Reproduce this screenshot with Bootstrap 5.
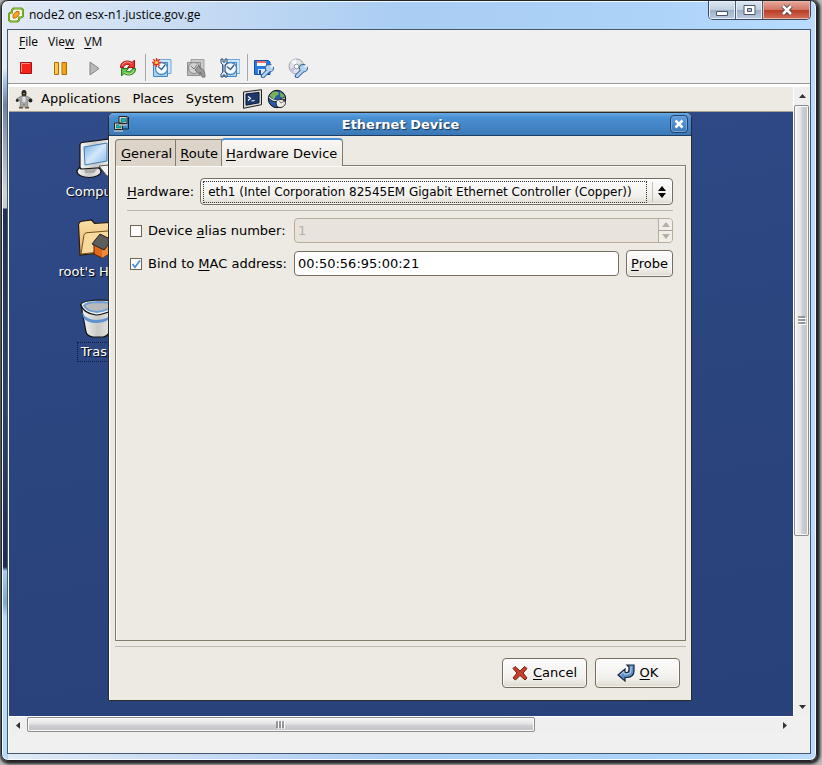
<!DOCTYPE html>
<html lang="en">
<head>
<meta charset="utf-8">
<meta name="viewport" content="width=device-width, initial-scale=1">
<title>node2 on esx-n1.justice.gov.ge</title>
<link href="https://cdn.jsdelivr.net/npm/bootstrap@5.3.0/dist/css/bootstrap.min.css" rel="stylesheet">
<style>
  body { background: #b9b9b9; padding: 0 5px 4px 1px; font: 13px/18px "DejaVu Sans", sans-serif; color: #000; }
  button, input, select { font: inherit; color: inherit; }
  svg { display: block; flex: none; }
  u { text-underline-offset: 2px; text-decoration-thickness: 1px; }

  /* outer Windows frame */
  .aero { min-height: calc(100vh - 4px); border: 1px solid #20242c; border-radius: 7px; padding: 0 5px 6px;
    background:
      linear-gradient(#b5cbe600 0 68px, #a9c6ea 80px, #6f83a5 104px, #ccd1dc 190px, #c8cbd2 207px, #1f3058 208px, #2c436f 400px, #1d2d52 566px, #a9cdf0 570px, #7fa8cb 602px, #b4d9fb 615px) left / 6px 100% no-repeat,
      linear-gradient(90deg, #e2eaf5, #c5daf3 25%, #a9cdf3 50%, #add3f8 80%, #b9dcff);
    box-shadow: inset 0 0 0 1px #f4faff, 1px 1px 3px 2px #222; }
  .caption { height: 28px; font: 12px/16px "Open Sans", sans-serif; }
  .caption-text { padding: 6px 0 0 1px; gap: 5px; }
  .cap-set { height: 19px; border: 1px solid #3a4a62; border-top: 0; border-radius: 0 0 5px 5px; overflow: hidden; }
  .cap-btn { width: 27px; border: 0; border-right: 1px solid #4d5d76; padding: 0;
    background: linear-gradient(#dfe8f2, #c0cfdf 48%, #9aaec6 50%, #bccde0); box-shadow: inset 0 0 0 1px #e6eef7; }
  .cap-close { width: 47px; border-right: 0; background: linear-gradient(#e5a99c, #d27565 48%, #b83a26 50%, #d4705a); box-shadow: inset 0 0 0 1px #eab6a8; }

  .client { border: 1px solid #46586e; background: #f0f0f0; }
  .menus { font: 12px/18px "Open Sans", sans-serif; padding: 3px 11px; gap: 10px; }
  .menus a, .panel a { color: #000; text-decoration: none; }
  .tools { height: 30px; padding-left: 1px; border-bottom: 1px solid #989898; }
  .tool { width: 34px; height: 28px; padding: 0; border: 0; background: none; display: flex; align-items: center; justify-content: center; }
  .tool-rule { width: 1px; height: 27px; margin-right: -1px; background: #a8a8a8; }
  .viewport { border: solid #fff; border-width: 3px 0 0 1px; }

  /* guest desktop */
  .guest { border-right: 1px solid #fff; min-width: 0; }
  .panel { height: 25px; background: #edeae3; border-bottom: 1px solid #a99f91; padding-left: 6px; }
  .panel .text-item { margin-right: 12px; }
  .desk { background: linear-gradient(170deg, #304b89, #2b457f 45%, #29417a); padding-top: 23px; overflow: hidden; }
  .desk-col { width: 178px; color: #fff; gap: 14px; text-shadow: 1px 1px 1px #000; }
  .desk-item { color: #fff; text-decoration: none; display: flex; flex-direction: column; align-items: center; }
  .desk-item.chosen span { outline: 1px dotted #0d1c44; padding: 0 3px; }

  /* dialog */
  .dlg { position: absolute; left: 99px; right: 101px; top: 0; bottom: 15px; background: #edeae3; border: 1px solid #2d2b26; border-radius: 6px 6px 0 0; box-shadow: inset 1px 0 #fff; }
  .dlg-bar { height: 23px; padding: 0 3px 0 4px; border-bottom: 1px solid #1e3e63; border-radius: 5px 5px 0 0; color: #fff;
    background: linear-gradient(#68aae6, #4a8fd3 20%, #4385c6 60%, #3b79b5); text-shadow: 1px 1px 1px #15304f; }
  .dlg-bar strong { padding-top: 2px; }
  .dlg-x { width: 18px; height: 18px; padding: 0; border: 1px solid #21436c; border-radius: 4px; background: linear-gradient(#5fa0dd, #3c78b5); display: flex; align-items: center; justify-content: center; box-shadow: inset 0 0 0 1px #6fa9de; }
  .dlg-body { padding: 2px 5px 12px 6px; }
  .tabset { height: 28px; margin-bottom: -1px; z-index: 1; }
  .tabset button { height: 27px; border: 1px solid #857b6c; border-bottom: 0; padding: 1px 3px 0 4px; margin-right: -1px; background: #dcd4c9; white-space: nowrap; }
  .tabset button:first-child { border-radius: 4px 0 0; padding-left: 5px; }
  .tabset button.current { height: 28px; border-top: 2px solid #4a90d9; border-radius: 4px 4px 0 0; padding-right: 5px; background: linear-gradient(#f8f7f4, #edeae3 80%); }
  .sheet { border: 1px solid #857b6c; padding: 12px 12px 0 11px; box-shadow: inset 1px 1px #fbfaf8; }
  .rule { height: 1px; margin: 5px 0 6px; background: #bcb8b0; }
  .gtk-btn { border: 1px solid #776d5f; border-radius: 4px; padding: 0 4px; background: linear-gradient(#fdfdfc, #f1efeb 70%, #dfdad1); box-shadow: inset 0 0 0 1px #ffffffa0; display: flex; align-items: center; justify-content: center; white-space: nowrap; }
  .hw-label { padding-right: 6px; }
  .hw { height: 27px; padding: 2px 6px 2px 2px; gap: 5px; min-width: 0; }
  .hw select { appearance: none; border: 1px dotted #333; background: none; height: 22px; padding: 0 1px 0 4px; min-width: 0; outline: 0; font-size: 12px; }
  .hw-arrows { border-left: 1px solid #c5beb2; padding-left: 5px; height: 20px; }
  .check-row { height: 27px; margin-bottom: 6px; }
  .check-label { width: 167px; padding-left: 3px; gap: 6px; }
  .check-label input { appearance: none; width: 12px; height: 12px; margin: 0; border: 1px solid #6d6454; background: #fff; flex: none; }
  .check-label input:checked { background: #fff url("data:image/svg+xml,%3Csvg xmlns='http://www.w3.org/2000/svg' viewBox='0 0 10 10'%3E%3Cpath d='M1.5 5 4 8.2 9 1.5' fill='none' stroke='%234a90d9' stroke-width='1.8'/%3E%3C/svg%3E"); }
  .field { height: 25px; margin-right: 7px; border: 1px solid #776d5f; border-radius: 4px; background: #fff; padding: 0 3px; min-width: 0; outline: 0; }
  .spin { height: 25px; border: 1px solid #b8ad98; border-radius: 4px; background: #e8e4dd; overflow: hidden; }
  .spin input { border: 0; background: none; color: #b5b0a7; padding: 0 3px; min-width: 0; }
  .spin-btns { width: 14px; border-left: 1px solid #b8ad98; }
  .spin-btns button { padding: 0; border: 0; background: #f1eee9; display: flex; align-items: center; justify-content: center; flex: 1; }
  .spin-btns button + button { border-top: 1px solid #a9a293; }
  .acts { padding: 5px 6px 0 0; }
  .act { width: 85px; height: 30px; gap: 5px; }

  /* scroll bars */
  .sb { background: #efefef; }
  .sb-v { width: 16px; }
  .sb-h { height: 17px; margin-right: 16px; border-top: 1px solid #fff; }
  .sb button { padding: 0; border: 0; background: none; width: 16px; height: 18px; display: flex; align-items: center; justify-content: center; flex: none; }
  .sb-h button { width: 18px; height: 16px; }
  .thumb { border: 1px solid #8c8c8c; border-radius: 2px; display: flex; align-items: center; justify-content: center; box-shadow: inset 0 0 0 1px #fafafa; }
  .sb-v .thumb { flex: 430; margin-right: 1px; background: linear-gradient(90deg, #f5f5f5, #e4e4e6 45%, #cfd0d3 55%, #c0c1c5); }
  .sb-v .rest { flex: 163; }
  .sb-h .thumb { flex: 507; height: 15px; background: linear-gradient(#f5f5f5, #e4e4e6 45%, #cfd0d3 55%, #c0c1c5); }
  .sb-h .rest { flex: 242; }
  .status { height: 20px; }
</style>
<script src="https://cdn.jsdelivr.net/npm/bootstrap@5.3.0/dist/js/bootstrap.bundle.min.js"></script>
</head>
<body>
<svg width="0" height="0" class="position-absolute" aria-hidden="true">
  <defs>
    <g id="clock"><path d="M5 1.500h14v14H5z" fill="#cfe6fa" stroke="#6fa8dc"/><path d="M1.500 4.500h14v14h-14z" fill="#a9d2f5" stroke="#3f86c8"/><circle cx="9.500" cy="10.500" r="6" fill="#f4faff" stroke="#4f86b8" stroke-width="1.300"/><path d="M6 8.500l3.500 3 3.500-4.500" fill="none" stroke="#33628f" stroke-width="1.300"/></g>
    <g id="wrench"><path d="M9 18l7-7" stroke="#2d5f96" stroke-width="4.500" stroke-linecap="round"/><path d="M15 6.500a4 4 0 0 1 4.500 4.500 3.500 3.500 0 0 1-5 2.500 3.500 3.500 0 0 1 .5-7z" fill="#b5d3f0" stroke="#2d5f96"/><path d="M9 18l7-7" stroke="#b5d3f0" stroke-width="2.500" stroke-linecap="round"/><path d="M17 9.500l2.500-3" stroke="#f0f0f0" stroke-width="2.500"/></g>
    <linearGradient id="metal" x2="1" y2="0"><stop stop-color="#f6f6f4"/><stop offset=".5" stop-color="#c9c9c6"/><stop offset="1" stop-color="#f0f0ee"/></linearGradient>
    <linearGradient id="screen" x2="1" y2="1"><stop stop-color="#6fa9e0"/><stop offset=".5" stop-color="#d3e8fb"/><stop offset="1" stop-color="#85b8e8"/></linearGradient>
    <linearGradient id="manila" x2="0" y2="1"><stop stop-color="#fbdfa7"/><stop offset="1" stop-color="#e7b566"/></linearGradient>
    <linearGradient id="amber" x2="1" y2="0"><stop stop-color="#ffd35a"/><stop offset="1" stop-color="#f09a00"/></linearGradient>
  </defs>
</svg>

<div class="aero d-flex flex-column">
  <header class="caption d-flex">
    <div class="caption-text d-flex align-items-start">
      <svg width="16" height="16" viewBox="0 0 16 16"><path d="M5.500 1.500h8l1.500 1.500v6l-1.500 1.500H11V13l-1.500 1.500H2.500L1 13V7l1.500-1.500H4V3z" fill="#f3f8e4" stroke="#5c9418" stroke-width="2"/><path d="M5.500 1.500h8l1.500 1.500v6l-1.500 1.500H11V13l-1.500 1.500H2.500L1 13V7l1.500-1.500H4V3z" fill="none" stroke="#8fc63d" stroke-width=".8"/><path d="M5 11V8l3-3.500h3V7.500L8 11z" fill="#f6a623" stroke="#c96c0b"/></svg>
      <span>node2 on esx-n1.justice.gov.ge</span>
    </div>
    <div class="cap-set d-flex ms-auto">
      <button class="cap-btn" aria-label="Minimize"><svg class="m-auto" width="14" height="14" viewBox="0 0 14 14"><path d="M1.500 8.500h11v4h-11z" fill="#fff" stroke="#4d5664"/></svg></button>
      <button class="cap-btn" aria-label="Maximize"><svg class="m-auto" width="13" height="12" viewBox="0 0 13 12"><path d="M1 1.500h11v9H1z" fill="#fff" stroke="#4d5664"/><path d="M4.500 4.500h4v3h-4z" fill="#a8bdd6" stroke="#4d5664"/></svg></button>
      <button class="cap-btn cap-close" aria-label="Close window"><svg class="m-auto" width="14" height="12" viewBox="0 0 14 12"><path d="M3 2l8 8M11 2l-8 8" stroke="#4c3b42" stroke-width="4.500"/><path d="M3 2l8 8M11 2l-8 8" stroke="#fff" stroke-width="2.600"/></svg></button>
    </div>
  </header>

  <main class="client d-flex flex-column flex-grow-1">
    <nav class="menus d-flex" aria-label="Window menu"><a href="#"><u>F</u>ile</a><a href="#">Vie<u>w</u></a><a href="#"><u>V</u>M</a></nav>
    <div class="tools d-flex" role="toolbar" aria-label="Virtual machine">
      <button class="tool" aria-label="Power off"><svg width="12" height="12"><path d="M.5.5h11v11H.5z" fill="#f2241c" stroke="#a80f0f"/><path d="M1.500 10V1.500H10" fill="none" stroke="#ff8a80"/></svg></button>
      <button class="tool" aria-label="Suspend"><svg width="13" height="13"><path d="M.5.5h4v12h-4zM8 .5h4.500v12H8z" fill="url(#amber)" stroke="#b56a00"/></svg></button>
      <button class="tool" aria-label="Power on"><svg width="11" height="15"><path d="M1 1l9 6.500L1 14z" fill="#b9b9b9" stroke="#838383"/></svg></button>
      <button class="tool" aria-label="Restart"><svg width="18" height="18" viewBox="0 0 18 18"><path d="M1.500 8.500C1 3 8 0 13 3.500L15.500 1v7.500H8.500l2.300-2.500C8.500 4.500 5.500 5.500 4.500 8.500z" fill="#ee3b2f" stroke="#9c1510"/><path d="M3 6.500C5 2.500 9 2 12.500 4.500" fill="none" stroke="#ff9d94"/><path d="M16.500 9.500C17 15 10 18 5 14.500L2.500 17V9.500h7L7.200 12c2.300 1.500 5.300.5 6.300-2.500z" fill="#66c24a" stroke="#237a1b"/><path d="M15 11.500c-2 4-6 4.500-9.500 2" fill="none" stroke="#b9ec9f"/></svg></button>
      <span class="tool-rule"></span>
      <button class="tool" aria-label="Take snapshot"><svg width="20" height="20" viewBox="0 0 20 20"><use href="#clock"/><path d="M4.500 0v9M0 4.500h9M1.300 1.300l6.400 6.400M7.700 1.300L1.300 7.700" stroke="#ee2c12" stroke-width="1.300"/><circle cx="4.500" cy="4.500" r="1.600" fill="#ffd94a"/></svg></button>
      <button class="tool" aria-label="Revert snapshot"><svg width="20" height="20" viewBox="0 0 20 20"><path d="M5 1.500h13v13H5z" fill="#c9c9c9" stroke="#a2a2a2"/><path d="M1.500 4.500h13v13h-13z" fill="#bbb" stroke="#8f8f8f"/><circle cx="8" cy="10" r="5.500" fill="#d3d3d3" stroke="#8b8b8b"/><path d="M5 8l3 3 3-4" fill="none" stroke="#777"/><path d="M9 12l4-4.500 1 2.500q5 1 5 9h-3q0-4-2-5v2.500z" fill="#9a9a9a" stroke="#717171"/></svg></button>
      <button class="tool" aria-label="Manage snapshots"><svg width="20" height="20" viewBox="0 0 20 20"><g transform="translate(1 0)"><use href="#clock"/></g><path d="M1 1v4l2 2v7l-2 2v3h2v-2h2v2h2v-3l-2-2V7l2-2V1H5v3H3V1z" fill="#dceaf7" stroke="#2c4d73"/></svg></button>
      <span class="tool-rule"></span>
      <button class="tool" aria-label="Floppy settings"><svg width="20" height="20" viewBox="0 0 20 20"><path d="M.5 2.500h14l1.500 1.500v12.500H.5z" fill="#2a7be0" stroke="#1450a8"/><path d="M3 3h9v5H3z" fill="#fff"/><path d="M3 4h9" stroke="#e34234" stroke-width="1.500"/><path d="M4 11h7v5H4z" fill="#dfe7f0"/><path d="M5 12h2v4H5z" fill="#1450a8"/><use href="#wrench"/></svg></button>
      <button class="tool" aria-label="CD settings"><svg width="20" height="20" viewBox="0 0 20 20"><circle cx="8.500" cy="8.500" r="7.500" fill="#dfe2e6" stroke="#9aa0a8"/><path d="M8.500 8.500L3 3.500a7.500 7.500 0 0 1 5-2.300z" fill="#f7fafc"/><path d="M8.500 8.500l6-4.500a7.500 7.500 0 0 1 1.300 4z" fill="#b9d8b5"/><path d="M8.500 8.500L1.500 11a7.500 7.500 0 0 0 3 4z" fill="#c8c0e2"/><circle cx="8.500" cy="8.500" r="2.300" fill="#fff" stroke="#8d959e"/><use href="#wrench"/></svg></button>
    </div>

    <div class="viewport d-flex flex-column flex-grow-1">
      <div class="d-flex flex-grow-1">
        <section class="guest d-flex flex-column flex-grow-1">
          <nav class="panel d-flex align-items-center" aria-label="Guest panel">
            <svg class="me-2" width="18" height="20" viewBox="0 0 18 20"><path d="M9 1c-2 0-2.500 1.500-2.500 3.500L7 7h4l.5-2.500C11.500 2.500 11 1 9 1z" fill="#222"/><path d="M8 4h2l-1 2z" fill="#f0a020"/><path d="M6.500 7L2 9.500V12l3-.5.5 4.500H5v2.500h3L9 15l1 3.500h3V16h-.5l.5-4.500 3 .5V9.500L11.500 7z" fill="#a6a6a6" stroke="#6a6a6a" stroke-width=".6"/><path d="M7.500 8h3v5h-3z" fill="#e0e0e0"/><circle cx="2.200" cy="11.500" r="1.400" fill="#222"/><circle cx="15.500" cy="11.500" r="1.900" fill="#222"/><path d="M4 18h4v1.500H4zM10 18h4v1.500h-4z" fill="#6b5326"/></svg>
            <a class="text-item" href="#">Applications</a><a class="text-item" href="#">Places</a><a class="text-item me-2" href="#">System</a>
            <a href="#" class="me-1" aria-label="Terminal"><svg width="21" height="20" viewBox="0 0 21 20"><path d="M1.500 3L19.500.7v15L1.500 19.300z" fill="#d9d9d4" stroke="#222"/><path d="M4 5l13-1.600v10.400L4 16.200z" fill="#1e3869" stroke="#0c1a38"/><path d="M6 7.500l2.500 1.800L6 11.500M9.500 12l3-.5" fill="none" stroke="#fff" stroke-width="1.200"/></svg></a>
            <a href="#" aria-label="Web browser"><svg width="21" height="20" viewBox="0 0 21 20"><circle cx="10" cy="10" r="8.700" fill="#275aa6" stroke="#111"/><path d="M3 6c2-4 6-4 8-3l1 2-3 2-2 3-4 1z" fill="#79b356"/><path d="M13 3l4 3 .5 3-4-1z" fill="#79b356"/><path d="M2 8c4 5 10 5 16 1" fill="none" stroke="#111" stroke-width="2.600"/><path d="M2 8c4 4.500 10 4.500 16 1" fill="none" stroke="#d5dbe2" stroke-width="1.200"/><path d="M9 14c0-3 4-5 8-2.500 3 2 1 6-3 7-3 .5-5-1.500-5-4.500z" fill="#ededeb" stroke="#222"/><path d="M12 11.500l2 2.500 3-1.500" fill="none" stroke="#777"/></svg></a>
          </nav>

          <div class="desk position-relative flex-grow-1">
            <div class="desk-col d-flex flex-column">
              <a class="desk-item" href="#"><svg width="48" height="48" viewBox="0 0 48 48"><ellipse cx="15" cy="36.500" rx="12" ry="6" fill="url(#metal)" stroke="#111" stroke-width="1.200"/><path d="M10 29l14 4-4 5H11z" fill="#aaa"/><path d="M6 9.500Q6 8 8 7.500L36 4v28L8 34q-2 0-2-2z" fill="url(#metal)" stroke="#111" stroke-width="1.200"/><path d="M10 12l23-4v18l-22 4z" fill="url(#screen)" stroke="#487bb1"/><path d="M25 31l20-2v10l-12 2z" fill="#f1f1ef" stroke="#555"/></svg><span>Computer</span></a>
              <a class="desk-item" href="#"><svg width="48" height="48" viewBox="0 0 48 48"><path d="M4.500 9l2-2.500 11-1.500 3 3.500L44 7v29L6 40z" fill="url(#manila)" stroke="#2b1c08" stroke-width="1.200"/><path d="M7 39l3-19q.5-2 3-2.300L46 15v20z" fill="#f9d99c" stroke="#74501c"/><path d="M20 29l8 3 8-4v10l-8 5-8-4z" fill="#e06a1a" stroke="#5a2507"/><path d="M28 32l8-4v10l-8 5z" fill="#f08a3c"/><path d="M18 29l8-10 12 6-8 10z" fill="#5d5d5d" stroke="#222"/></svg><span>root's Home</span></a>
              <a class="desk-item chosen" href="#"><svg width="48" height="48" viewBox="0 0 48 48"><path d="M7 10l5 27q1 4 7 5h10q5-1 6-5l6-27z" fill="url(#metal)" stroke="#111" stroke-width="1.200"/><path d="M8 17q4 8 15 8 14-1 17-9l-1 4q-4 7-16 8-11 0-14-6z" fill="#5f93cf"/><path d="M7 10q0-4 17-5 17 0 17 4-1 9-19 11Q9 18 7 10z" fill="#f1f3f5" stroke="#111" stroke-width="1.200"/><path d="M10 10.500q2-3 14-3.500 13 0 14 2.500-2 6-15 7.500Q12 16 10 10.500z" fill="#b8babb" stroke="#6e9fd4" stroke-width="2"/></svg><span>Trash</span></a>
            </div>

            <section class="dlg d-flex flex-column" role="dialog" aria-labelledby="dlg-title">
              <header class="dlg-bar d-flex align-items-center">
                <svg width="18" height="18" viewBox="0 0 18 18"><path d="M15.500 2v12H10" fill="none" stroke="#123" /><path d="M6 1.500h8v7H6zM1.500 8h8v6.500h-8z" fill="#d9d7cf" stroke="#222"/><path d="M8 3.500h4.500V7H8zM3.500 9.800H8V13H3.500z" fill="#16b5ae" stroke="#0b6663" stroke-width=".6"/><path d="M1 16h9M6 10h8" stroke="#bbb" stroke-width="1.500"/></svg>
                <strong id="dlg-title" class="flex-grow-1 text-center">Ethernet Device</strong>
                <button class="dlg-x" aria-label="Close dialog"><svg width="10" height="10"><path d="M1.500 1.500l7 7M8.500 1.500l-7 7" stroke="#fff" stroke-width="2.600"/></svg></button>
              </header>
              <div class="dlg-body d-flex flex-column flex-grow-1">
                <div class="tabset d-flex align-items-end position-relative" role="tablist">
                  <button role="tab"><u>G</u>eneral</button><button role="tab"><u>R</u>oute</button><button role="tab" class="current" aria-selected="true"><u>H</u>ardware Device</button>
                </div>
                <div class="sheet flex-grow-1" role="tabpanel">
                  <div class="d-flex align-items-center">
                    <label for="hw" class="hw-label flex-shrink-0"><u>H</u>ardware:</label>
                    <div class="hw gtk-btn flex-grow-1">
                      <select id="hw" class="flex-grow-1"><option>eth1 (Intel Corporation 82545EM Gigabit Ethernet Controller (Copper))</option></select>
                      <span class="hw-arrows d-flex align-items-center"><svg width="8" height="12"><path d="M4 0l4 5H0zM0 7h8l-4 5z"/></svg></span>
                    </div>
                  </div>
                  <div class="rule"></div>
                  <div class="check-row d-flex align-items-center">
                    <label class="check-label d-flex align-items-center"><input type="checkbox"><span>Device <u>a</u>lias number:</span></label>
                    <div class="spin d-flex flex-grow-1">
                      <input class="flex-grow-1" type="text" value="1" aria-label="Alias number" disabled>
                      <div class="spin-btns d-flex flex-column"><button disabled aria-label="Increase"><svg width="8" height="5"><path d="M4 0l4 5H0z" fill="#b5b0a7"/></svg></button><button disabled aria-label="Decrease"><svg width="8" height="5"><path d="M0 0h8L4 5z" fill="#b5b0a7"/></svg></button></div>
                    </div>
                  </div>
                  <div class="check-row d-flex align-items-stretch">
                    <label class="check-label d-flex align-items-center"><input type="checkbox" checked><span>Bind to <u>M</u>AC address:</span></label>
                    <input class="field flex-grow-1 align-self-center" type="text" value="00:50:56:95:00:21" aria-label="MAC address">
                    <button class="gtk-btn"><span><u>P</u>robe</span></button>
                  </div>
                </div>
                <div class="rule"></div>
                <div class="acts d-flex justify-content-end gap-2">
                  <button class="gtk-btn act"><svg width="16" height="16" viewBox="0 0 16 16"><path d="M3 1.500L8 6l4.500-4.500 2.500 2L11 8l4 5-2 2-5-4.500L3.500 15 1 13l4-5L1 3.500z" fill="#c8402c" stroke="#6b1f14"/></svg><span><u>C</u>ancel</span></button>
                  <button class="gtk-btn act"><svg width="18" height="18" viewBox="0 0 18 18"><path d="M10 1h7v6q0 6-7 6.500h-2V17L1 11l7-6v3.500h2q2 0 2-3V3z" fill="#5f8fc4" stroke="#17263c" stroke-width="1.200"/><path d="M3 11l4-3.500V10h4q3 0 3-4V2.500" fill="none" stroke="#b9d2ee"/></svg><span><u>O</u>K</span></button>
                </div>
              </div>
            </section>
          </div>
        </section>

        <div class="sb sb-v d-flex flex-column flex-shrink-0">
          <button aria-label="Scroll up"><svg width="7" height="4"><path d="M3.500 0L7 4H0z" fill="#333"/></svg></button>
          <div class="thumb"><svg width="8" height="9"><path d="M0 1h7M0 4h7M0 7h7" stroke="#555"/><path d="M0 2.500h8M0 5.500h8M0 8.500h8" stroke="#fff"/></svg></div>
          <div class="rest"></div>
          <button aria-label="Scroll down"><svg width="7" height="4"><path d="M0 0h7L3.500 4z" fill="#333"/></svg></button>
        </div>
      </div>
      <div class="sb sb-h d-flex">
        <button aria-label="Scroll left"><svg width="4" height="7"><path d="M4 0v7L0 3.500z" fill="#333"/></svg></button>
        <div class="thumb"><svg width="9" height="8"><path d="M1 0v7M4 0v7M7 0v7" stroke="#555"/><path d="M2.500 0v8M5.500 0v8M8.500 0v8" stroke="#fff"/></svg></div>
        <div class="rest"></div>
        <button aria-label="Scroll right"><svg width="4" height="7"><path d="M0 0v7l4-3.500z" fill="#333"/></svg></button>
      </div>
      <div class="status"></div>
    </div>
  </main>
</div>
</body>
</html>
